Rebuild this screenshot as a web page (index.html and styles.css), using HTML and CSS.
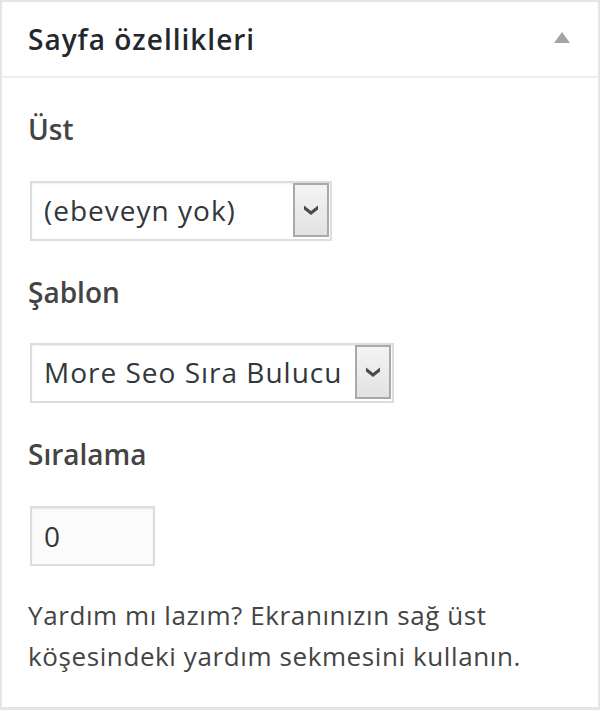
FILE: index.html
```html
<!DOCTYPE html>
<html lang="tr">
<head>
<meta charset="utf-8">
<title>Sayfa özellikleri</title>
<link rel="stylesheet" href="styles.css">
</head>
<body>
<div class="box">
  <div class="box-header">
    <h2 class="box-title">Sayfa özellikleri</h2>
    <span class="toggle"></span>
  </div>
  <div class="box-body">
    <p class="label">Üst</p>
    <div class="select select-parent">
      <span class="select-text">(ebeveyn yok)</span>
      <span class="select-btn"><svg width="16" height="12" viewBox="0 0 16 12"><path d="M1 1.5 L8 7 L15 1.5 L15 5.5 L8 11 L1 5.5 Z" fill="#4a4a4a"/></svg></span>
    </div>
    <p class="label">Şablon</p>
    <div class="select select-template">
      <span class="select-text">More Seo Sıra Bulucu</span>
      <span class="select-btn"><svg width="16" height="12" viewBox="0 0 16 12"><path d="M1 1.5 L8 7 L15 1.5 L15 5.5 L8 11 L1 5.5 Z" fill="#4a4a4a"/></svg></span>
    </div>
    <p class="label">Sıralama</p>
    <div class="input"><span class="input-text">0</span></div>
    <p class="help">Yardım mı lazım? Ekranınızın sağ üst köşesindeki yardım sekmesini kullanın.</p>
  </div>
</div>
</body>
</html>
```
FILE: styles.css
```css
html, body {
  margin: 0;
  padding: 0;
  background: #fff;
}
body {
  font-family: "Open Sans", "Noto Sans", sans-serif;
  color: #444;
}
.box {
  width: 600px;
  height: 710px;
  box-sizing: border-box;
  border: 2px solid #e5e5e5;
  border-bottom-width: 3px;
  background: #fff;
}
.box-header {
  height: 74px;
  border-bottom: 2px solid #eee;
  display: flex;
  align-items: center;
  justify-content: space-between;
  padding: 0 28px 0 26px;
}
.box-title {
  margin: 0;
  font-size: 28px;
  line-height: 36px;
  letter-spacing: 1px;
  font-weight: 600;
  color: #23282d;
}
.toggle {
  width: 0;
  height: 0;
  border-left: 8px solid transparent;
  border-right: 8px solid transparent;
  border-bottom: 11px solid #a0a5aa;
  margin-top: -3px;
}
.box-body {
  padding: 33px 26px 0 26px;
}
.label {
  margin: 0;
  font-size: 28px;
  font-weight: 600;
  color: #444;
  line-height: 36px;
}
.select {
  display: flex;
  align-items: stretch;
  box-sizing: border-box;
  height: 60px;
  border: 2px solid #ddd;
  background: #fff;
  margin: 34px 0 33px 2px;
  padding: 0 1px 2px 0;
  box-shadow: inset 0 1px 2px rgba(0,0,0,0.07);
}
.select-text {
  flex: 1;
  font-size: 28px;
  letter-spacing: 1px;
  color: #32373c;
  padding-left: 12px;
  display: flex;
  align-items: center;
  white-space: nowrap;
}
.select-btn {
  width: 32px;
  border: 2px solid #a9a9a9;
  background: linear-gradient(#f4f4f4, #e2e2e2);
  display: flex;
  align-items: center;
  justify-content: center;
}
.select-parent { width: 302px; }
.select-template { width: 364px; margin-top: 33px; }
.input {
  box-sizing: border-box;
  width: 125px;
  height: 60px;
  margin: 34px 0 0 2px;
  border: 2px solid #ddd;
  box-shadow: inset 0 1px 2px rgba(0,0,0,0.07);
  background: #fbfbfb;
  display: flex;
  align-items: center;
  padding-left: 12px;
}
.input-text {
  font-size: 28px;
  color: #32373c;
}
.help {
  margin: 29px 0 0 0;
  font-size: 26px;
  letter-spacing: 0.6px;
  line-height: 41px;
  color: #444;
}
```
